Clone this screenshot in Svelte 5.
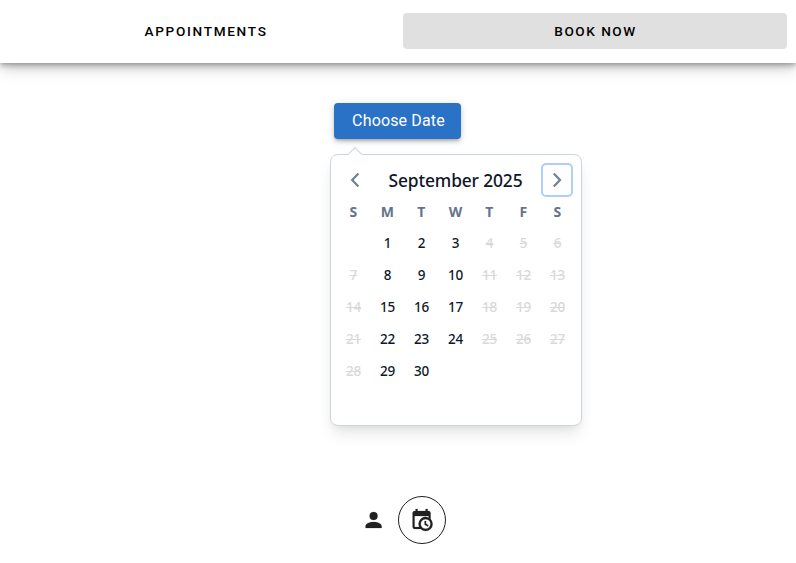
<script>
  const weekdays = ['S', 'M', 'T', 'W', 'T', 'F', 'S'];
  const cells = Array.from({ length: 42 }, (_, i) => {
    const col = i % 7;
    const day = i >= 1 && i <= 30 ? i : null;
    return { day, disabled: col === 0 || col > 3 };
  });
</script>

<div class="page">
  <header>
    <button class="tab">APPOINTMENTS</button>
    <button class="tab active">BOOK NOW</button>
  </header>

  <main>
    <div class="picker">
      <button class="choose">Choose Date</button>
      <section class="calendar">
        <span class="caret"></span>
        <div class="title">
          <button class="arrow" aria-label="Previous month">
            <svg viewBox="0 0 18 18"><path d="M12.4 2.6 6.2 9l6.2 6.4" /></svg>
          </button>
          <span class="month">September 2025</span>
          <button class="arrow focused" aria-label="Next month">
            <svg viewBox="0 0 18 18"><path d="M5.8 2.6 12 9l-6.2 6.4" /></svg>
          </button>
        </div>
        <div class="weekdays">
          {#each weekdays as name}<span>{name}</span>{/each}
        </div>
        <div class="days">
          {#each cells as { day, disabled }}
            <span class:disabled>{day ?? ''}</span>
          {/each}
        </div>
      </section>
    </div>
  </main>

  <nav>
    <button class="round" aria-label="Account">
      <svg viewBox="-0.6 0 24 24"><path d="M12 4a4 4 0 1 1 0 8 4 4 0 0 1 0-8m0 10c4.42 0 8 1.79 8 4v2H4v-2c0-2.21 3.58-4 8-4Z" /></svg>
    </button>
    <button class="round outlined" aria-label="Booking">
      <svg viewBox="-0.6 0 24 24"><path d="M15 13h1.5v2.82l2.44 1.41-.75 1.3L15 16.69V13m4-5H5v11h4.67A7 7 0 0 1 19 9.67V8M5 21a2 2 0 0 1-2-2V5c0-1.11.89-2 2-2h1V1h2v2h8V1h2v2h1a2 2 0 0 1 2 2v6.1A7 7 0 1 1 11.1 21H5m11-9.85a4.85 4.85 0 1 0 0 9.7 4.85 4.85 0 0 0 0-9.7Z" /></svg>
    </button>
  </nav>
</div>

<style>
  :global(body) {
    background: #fff;
  }
  .page {
    height: 563px;
    overflow: hidden;
    display: flex;
    flex-direction: column;
    box-sizing: border-box;
  }
  button {
    border: 0;
    margin: 0;
    padding: 0;
    background: none;
    display: flex;
    align-items: center;
    justify-content: center;
  }
  header {
    height: 63px;
    flex: none;
    box-sizing: border-box;
    padding: 13px 9px 14px 14px;
    display: grid;
    grid-template-columns: 384px 384px;
    column-gap: 5px;
    background: #fff;
    box-shadow: 0 2px 4px -1px rgba(0, 0, 0, 0.2), 0 4px 5px 0 rgba(0, 0, 0, 0.1), 0 1px 10px 0 rgba(0, 0, 0, 0.12), 0 4px 16px 0 rgba(0, 0, 0, 0.2);
  }
  .tab {
    height: 36px;
    box-sizing: border-box;
    border-radius: 4px;
    color: #000;
    font: 500 13.6px 'Roboto', sans-serif;
    letter-spacing: 1.7px;
  }
  .active {
    padding-left: 1px;
    background: #e0e0e0;
    letter-spacing: 1.5px;
  }
  main {
    flex: none;
    padding: 40px 0 0 330px;
  }
  .picker {
    width: 252px;
  }
  .choose {
    width: 127px;
    height: 36px;
    margin-left: 4px;
    padding: 0 0 1px 2px;
    box-sizing: border-box;
    border-radius: 4px;
    background: #2a72c6;
    color: #fff;
    font: 400 16px 'Roboto', sans-serif;
    letter-spacing: 0.15px;
    box-shadow: 0 3px 3px -2px rgba(0, 0, 0, 0.2), 0 3px 4px 0 rgba(0, 0, 0, 0.14), 0 1px 8px 0 rgba(0, 0, 0, 0.12);
  }
  .calendar {
    position: relative;
    box-sizing: border-box;
    height: 272px;
    margin-top: 15px;
    padding: 8px 6px;
    border: 1px solid #cbd5e0;
    border-radius: 8px;
    background: #fff;
    box-shadow: 0 10px 15px -3px rgba(0, 0, 0, 0.1), 0 4px 6px -2px rgba(0, 0, 0, 0.05);
    font-family: 'Noto Sans', sans-serif;
  }
  .caret {
    position: absolute;
    top: -6px;
    left: 19px;
    width: 10px;
    height: 10px;
    border: 1px solid #cbd5e0;
    border-right: 0;
    border-bottom: 0;
    background: #fff;
    transform: rotate(45deg);
    box-sizing: border-box;
  }
  .title {
    display: flex;
    align-items: center;
    justify-content: space-between;
    padding: 0 2px;
  }
  .arrow {
    box-sizing: border-box;
    width: 32px;
    height: 34px;
    border: 2px solid transparent;
    border-radius: 5px;
  }
  .focused {
    border-color: #b1cdf9;
  }
  .arrow svg {
    width: 18px;
    height: 18px;
    fill: none;
    stroke: #718096;
    stroke-width: 2.2;
  }
  .month {
    padding-right: 1px;
    color: #111629;
    font-size: 17.4px;
    font-weight: 500;
    line-height: 28px;
    letter-spacing: -0.14px;
    white-space: nowrap;
  }
  .weekdays,
  .days {
    display: grid;
    grid-template-columns: repeat(7, 34px);
    margin-left: -0.6px;
    text-align: center;
  }
  .weekdays {
    height: 30px;
    line-height: 30px;
    color: #64748b;
    font-size: 14px;
    font-weight: 700;
  }
  .days {
    grid-auto-rows: 32px;
    line-height: 32px;
    color: #0f172a;
    font-size: 13.5px;
    font-weight: 500;
    letter-spacing: -0.2px;
  }
  .days .disabled {
    color: #d9d9d9;
    text-decoration: line-through;
  }
  nav {
    display: flex;
    margin: 70px 0 0 350px;
  }
  .round {
    box-sizing: border-box;
    width: 48px;
    height: 48px;
    padding-right: 1.2px;
    border-radius: 50%;
  }
  .outlined {
    border: 1px solid #212121;
  }
  .round svg {
    width: 24px;
    height: 24px;
    fill: #212121;
    stroke: #212121;
    stroke-width: 0.2;
  }
</style>
